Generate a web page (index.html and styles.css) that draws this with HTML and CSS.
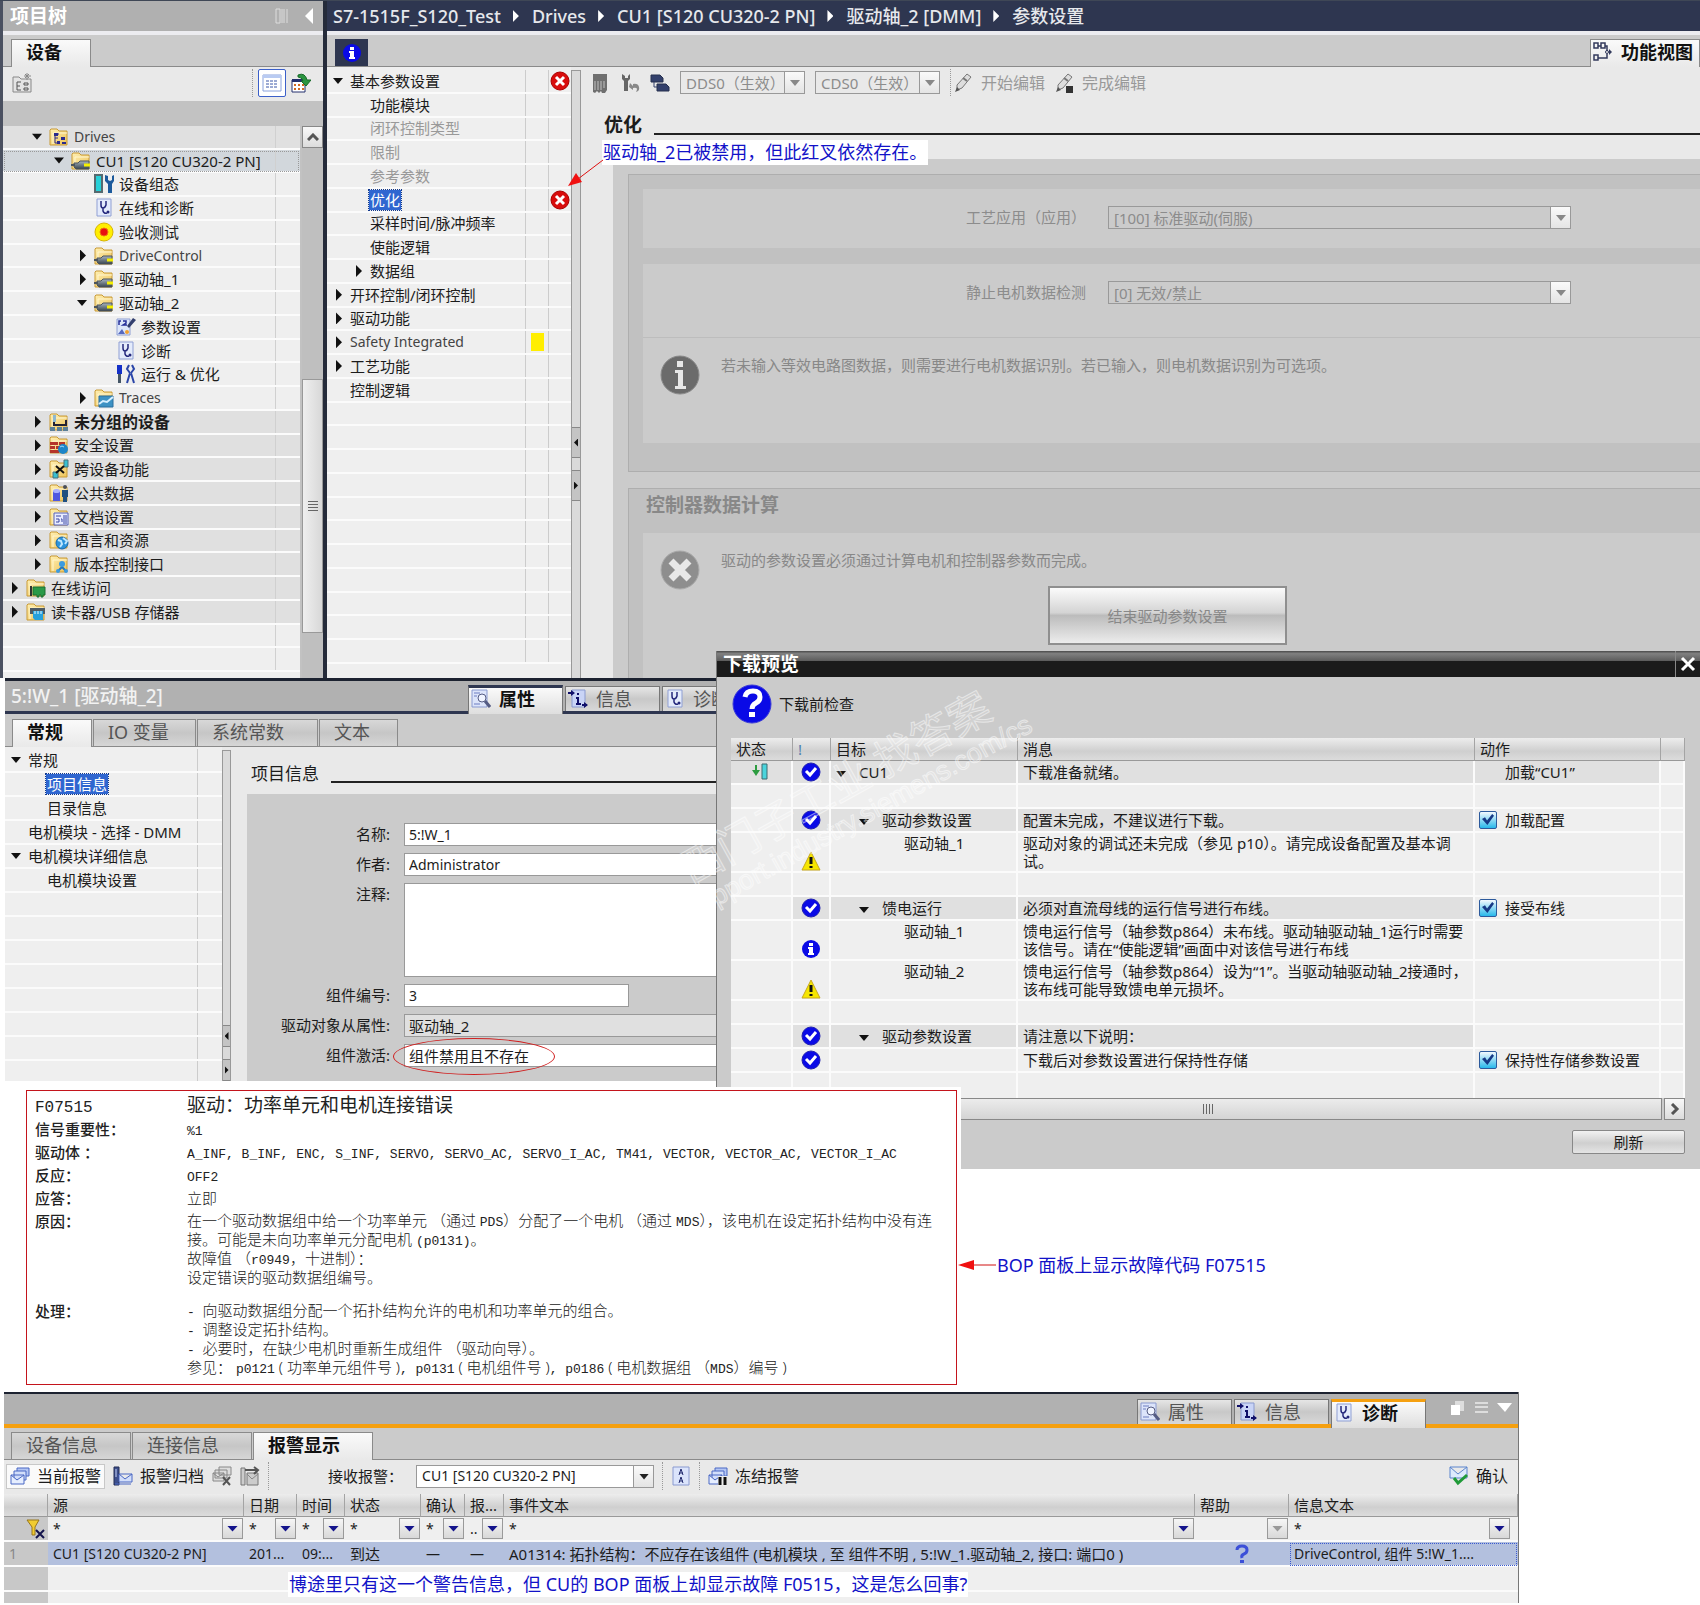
FILE: index.html
```html
<!DOCTYPE html>
<html lang="zh-CN">
  <head>
    <meta charset="utf-8" />
    <title>S7-1515F_S120_Test</title>
    <link rel="stylesheet" href="styles.css">
  </head>
  <body>
    <svg class="sprite" aria-hidden="true">
      <defs>
        <linearGradient id="gold" x1="0" y1="0" x2="1" y2="1">
          <stop offset="0" stop-color="#fff0b4" />
          <stop offset="1" stop-color="#edc35a" />
        </linearGradient>
        <linearGradient id="steel" x1="0" y1="0" x2="0" y2="1">
          <stop offset="0" stop-color="#a8b4be" />
          <stop offset="1" stop-color="#38444e" />
        </linearGradient>
      </defs>
      <symbol id="folder" viewBox="0 0 20 20">
        <path d="M1 18V3l1-1h6l2 2h8v14z" fill="url(#gold)" stroke="#c99a35" />
        <path d="M4 17V6h14" fill="none" stroke="#fff6d0" />
      </symbol>
      <symbol id="folder-net" viewBox="0 0 20 20">
        <use href="#folder" />
        <path d="M5 7h5M6 7v9h4M6 11h3" fill="none" stroke="#2a2a8c" />
        <path d="M5 6h4v3H5zM12 10h4v3h-4zM8 14h3v3H8zM13 15h4v2h-4z" fill="#2a2a8c" />
      </symbol>
      <symbol id="folder-drive" viewBox="0 0 20 20">
        <use href="#folder" />
        <path d="M3 12h4l2-2h9v8H5l-2-2z" fill="url(#steel)" stroke="#4c555c" />
        <path d="M0 14h4" stroke="#4c555c" stroke-width="2" />
        <path d="M13 14h6" stroke="#f5f000" stroke-width="3" />
      </symbol>
      <symbol id="device" viewBox="0 0 20 20">
        <path d="M1 1h7v17H1z" fill="#26d0d8" stroke="#566a70" stroke-width="2" />
        <path d="M11 1v6l3 3v9h4v-9l2-3V1l-2 1v4l-2 1-2-1V2z" fill="#1c5a9c" />
      </symbol>
      <symbol id="diag" viewBox="0 0 20 20">
        <path d="M3 1h14v17H3z" fill="#e4ebfb" stroke="#8f9fd4" />
        <path d="M7 3v4q0 3 2 3t3-3V3M9 10v3q1 3 4 2" fill="none" stroke="#25287c" stroke-width="1.500" />
        <circle cx="14" cy="14" r="1.500" fill="#25287c" />
      </symbol>
      <symbol id="accept" viewBox="0 0 20 20">
        <circle cx="10" cy="10" r="9" fill="#ffee00" stroke="#d8b400" />
        <circle cx="10" cy="10" r="4" fill="#e81010" stroke="#f07010" />
      </symbol>
      <symbol id="params" viewBox="0 0 20 20">
        <path d="M1 2h13v16H1z" fill="#dce6fa" stroke="#8f9fd4" />
        <path d="M3 8V4h2M7 4h3v2L7 8h4" fill="none" stroke="#26309a" stroke-width="1.500" />
        <path d="M11 9l6-8 3 2-7 8z" fill="#333f6e" />
        <path d="M2 17l4-5 3 5z" fill="#5568c0" />
        <circle cx="11" cy="15" r="2" fill="#f0a030" />
      </symbol>
      <symbol id="tune" viewBox="0 0 20 20">
        <path d="M1 1h5v9H1z" fill="#1430c8" />
        <path d="M2 10h3v9H2z" fill="#456" />
        <path d="M13 1l-2 4 3 4M16 1l2 4-3 4M14 9l-3 10M15 9l3 10" fill="none" stroke="#2a45a8" stroke-width="2" />
      </symbol>
      <symbol id="traces" viewBox="0 0 20 20">
        <use href="#folder" />
        <path d="M5 8h14v11H5z" fill="#3d92c4" stroke="#2b6f9e" />
        <path d="M5 16l4-3 4 1 6-5" fill="none" stroke="#d8f0ff" stroke-width="2" />
      </symbol>
      <symbol id="ungrouped" viewBox="0 0 20 20">
        <use href="#folder" />
        <path d="M5 4v9h12V8" fill="none" stroke="#223" stroke-width="2" />
        <path d="M4 3h3v7H4z" fill="#8fb8d0" />
        <path d="M1 15h5v4H1zM8 15h5v4H8zM14 15h5v4h-5z" fill="#5b7f96" />
      </symbol>
      <symbol id="security" viewBox="0 0 20 20">
        <use href="#folder" />
        <path d="M1 7h8v3H1zM10 7h6v3h-6zM1 11h5v3H1zM7 11h5v3H7zM1 15h9v3H1z" fill="#b5352a" />
        <circle cx="14" cy="14" r="5" fill="#1d85c8" />
        <path d="M11 12q2-2 4 0" fill="none" stroke="#a8dcf8" />
      </symbol>
      <symbol id="cross" viewBox="0 0 20 20">
        <use href="#folder" />
        <path d="M15 1h4v7h-4zM4 13h5v6H4z" fill="#38c0d0" stroke="#47727c" />
        <path d="M7 7l8 7M15 7l-8 7" stroke="#111" stroke-width="2" />
      </symbol>
      <symbol id="common" viewBox="0 0 20 20">
        <use href="#folder" />
        <path d="M4 8h7v10H4z" fill="#5058e0" />
        <ellipse cx="7.500" cy="8" rx="3.500" ry="2" fill="#a8b0ff" />
        <circle cx="16" cy="4" r="2" fill="#4a4f58" />
        <path d="M13 7h6v7h-1v5h-4v-5h-1z" fill="#1f4f80" />
      </symbol>
      <symbol id="docs" viewBox="0 0 20 20">
        <use href="#folder" />
        <path d="M5 6h14v12H5z" fill="#e8ecff" stroke="#5560b8" />
        <path d="M7 9h5M7 12h3v3H7M12 12h1v3M15 8v9M17 8v9" fill="none" stroke="#3b46a4" />
      </symbol>
      <symbol id="lang" viewBox="0 0 20 20">
        <use href="#folder" />
        <circle cx="13" cy="13" r="6" fill="#2a93dc" stroke="#1b68a8" />
        <path d="M9 10l3 1 1 3-2 3M14 8l4 3-2 3" fill="none" stroke="#bfe8ff" stroke-width="2" />
      </symbol>
      <symbol id="version" viewBox="0 0 20 20">
        <use href="#folder" />
        <path d="M13 9v4l-4 4M13 13l4 4" fill="none" stroke="#2776b8" stroke-width="2" />
        <circle cx="13" cy="10" r="3" fill="#3b9be0" />
        <circle cx="9" cy="17" r="2" fill="#3b9be0" />
        <circle cx="17" cy="17" r="2" fill="#3b9be0" />
      </symbol>
      <symbol id="online" viewBox="0 0 20 20">
        <use href="#folder" />
        <path d="M5 8v10" stroke="#333" stroke-width="2" />
        <path d="M7 9h12v8h-2v2h-2v-2h-2v2h-2v-2H7z" fill="#2a9a48" stroke="#1c6e32" />
      </symbol>
      <symbol id="card" viewBox="0 0 20 20">
        <use href="#folder" />
        <path d="M4 6h15v6H4z" fill="#4c5a66" />
        <path d="M7 9h10v9h-8l-2-2z" fill="#26a0dc" />
        <path d="M9 9v3M12 9v3M15 9v3" stroke="#e8f8ff" />
      </symbol>
      <symbol id="add-obj" viewBox="0 0 20 20">
        <path d="M1 19V4h6l2 2h10v13z" fill="#e4e4e4" stroke="#888" />
        <path d="M5 9v8h4M5 9h4M5 13h3M12 10h4v2h-4zM12 15h4v2h-4z" fill="none" stroke="#555" />
        <path d="M15 0v7M12 3h7M13 1l4 4M17 1l-4 4" stroke="#888" />
      </symbol>
      <symbol id="grid-view" viewBox="0 0 20 20">
        <path d="M1 2h18v16H1z" fill="#fff" stroke="#8aa2dc" />
        <path d="M1 2h18v3H1z" fill="#b9cbf2" />
        <path d="M4 8h12M4 11h12M4 14h12" stroke="#3a57a8" stroke-dasharray="3 1" />
      </symbol>
      <symbol id="goto" viewBox="0 0 20 20">
        <path d="M1 7h13v12H1z" fill="#fff" stroke="#24306e" />
        <path d="M1 6h13v3H1z" fill="#24306e" />
        <path d="M3 12h2M7 12h2M11 12h2M3 16h2M7 16h2M11 16h2" stroke="#d06a20" stroke-width="2" />
        <path d="M7 2q7-3 9 5h4l-5 6-5-5h2q-1-4-5-4z" fill="#2b9440" stroke="#176a28" />
      </symbol>
      <symbol id="error" viewBox="0 0 20 20">
        <circle cx="10" cy="10" r="9" fill="#d80c0c" stroke="#a00" />
        <path d="M6 6l8 8M14 6l-8 8" stroke="#fff" stroke-width="3" />
      </symbol>
      <symbol id="info" viewBox="0 0 20 20">
        <circle cx="10" cy="10" r="9" fill="#0a0ae6" />
        <path d="M8 4h4v3H8zM7 8h5v6h1v2H7v-2h1v-4H7z" fill="#fff" />
      </symbol>
      <symbol id="ok" viewBox="0 0 20 20">
        <circle cx="10" cy="10" r="9" fill="#0a0ae6" stroke="#2020b0" />
        <path d="M5 9l4 4 6-7" fill="none" stroke="#fff" stroke-width="3" />
      </symbol>
      <symbol id="warn" viewBox="0 0 20 20">
        <path d="M10 1l9 18H1z" fill="#f6e600" stroke="#c8a820" />
        <path d="M10 6v7M10 15v2" stroke="#111" stroke-width="3" />
      </symbol>
      <symbol id="big-info" viewBox="0 0 40 40">
        <circle cx="20" cy="20" r="19" fill="#6b6b6b" stroke="#8a8a8a" />
        <path d="M17 6h6v6h-6zM15 15h8v16h3v3H15v-3h3V18h-3z" fill="#e8e8e8" />
      </symbol>
      <symbol id="big-error" viewBox="0 0 40 40">
        <circle cx="20" cy="20" r="19" fill="#8e8e8e" stroke="#aaa" />
        <path d="M11 11l18 18M29 11L11 29" stroke="#e8e8e8" stroke-width="7" />
      </symbol>
      <symbol id="big-ask" viewBox="0 0 40 40">
        <circle cx="20" cy="20" r="19" fill="#0a0ae6" stroke="#3a3ad8" />
        <path d="M13 13q1-6 8-6t7 6q0 4-4 6t-4 6" fill="none" stroke="#fff" stroke-width="5" />
        <path d="M17 28h6v5h-6z" fill="#fff" />
      </symbol>
      <symbol id="module" viewBox="0 0 20 20">
        <path d="M3 1h14v16l-2 3h-3l-1-2-2 2-2-2-2 2-2-1z" fill="#6f6f6f" />
        <path d="M5 8v9M8 8v9M11 8v9M14 8v7" stroke="#c4c4c4" />
      </symbol>
      <symbol id="wrench" viewBox="0 0 20 20">
        <path d="M2 1v5l2 2v10h4V8l2-2V1L8 3v2H5V3z" fill="#666" />
        <path d="M10 10l3 3v-2q5-1 6 3t-3 5q3-5-3-4v2l-4-3z" fill="#888" />
      </symbol>
      <symbol id="copy-set" viewBox="0 0 20 20">
        <path d="M1 2h9l3 3v4H1zM7 11h9l3 3v4H7z" fill="#33406c" stroke="#26304f" />
        <path d="M4 9v5h3" fill="none" stroke="#33406c" />
      </symbol>
      <symbol id="pen" viewBox="0 0 20 20">
        <path d="M3 12L13 1l4 3L8 15l-5 2z" fill="#ddd" stroke="#777" />
        <path d="M9 5l4 3" stroke="#777" stroke-width="2" />
        <path d="M1 19l2-5 3 3z" fill="#555" />
      </symbol>
      <symbol id="function-view" viewBox="0 0 20 20">
        <path d="M1 1h4v5H1zM8 1h4v5H8zM1 13h4v5H1zM5 4h3M12 4h2v5M5 16h9v-4" fill="none" stroke="#333a5c" stroke-width="1.500" />
        <circle cx="14" cy="10" r="1.500" fill="none" stroke="#333a5c" />
        <path d="M16 7l3 3-3 3z" fill="#333a5c" />
      </symbol>
      <symbol id="prop" viewBox="0 0 20 20">
        <path d="M1 1h15v17H1z" fill="#dce4fa" stroke="#8a9ad0" />
        <path d="M3 4h6M3 7h3M3 15h6" stroke="#6c7cc0" />
        <circle cx="11" cy="9" r="4" fill="#f0f4ff" stroke="#555c84" />
        <path d="M14 12l5 6" stroke="#555c84" stroke-width="3" />
      </symbol>
      <symbol id="msg" viewBox="0 0 20 20">
        <path d="M4 1h13v17H4z" fill="#c9d4f6" stroke="#8a9ad0" />
        <path d="M0 4h5M14 16h5" stroke="#10106a" stroke-width="2" />
        <path d="M3 1l4 3-4 3zM16 13l4 3-4 3z" fill="#10106a" />
        <path d="M9 4h2v2H9zM8 8h3v6h2v2H8v-2h1v-4H8z" fill="#10106a" />
      </symbol>
      <symbol id="ready" viewBox="0 0 20 20">
        <path d="M5 3v8" stroke="#2c9c40" stroke-width="2" />
        <path d="M1 8l4 6 4-6z" fill="#2c9c40" />
        <path d="M11 2h5v15h-5z" fill="#4ad4dc" stroke="#3c6a70" />
      </symbol>
      <symbol id="mails" viewBox="0 0 20 20">
        <path d="M7 2h12v8H7z" fill="#b4c6f4" stroke="#4a68c4" />
        <path d="M4 5h12v9H4z" fill="#d2defa" stroke="#4a68c4" />
        <path d="M1 9h13v9H1zM1 9l6 5 7-5" fill="#e6eeff" stroke="#4a68c4" />
      </symbol>
      <symbol id="mails-off" viewBox="0 0 20 20">
        <path d="M7 1h12v8H7zM3 4h12v8H3zM1 7h11v8H1zM1 7l5 4 6-4" fill="#ddd" stroke="#888" />
        <path d="M11 11l7 8M18 11l-7 8" stroke="#555" stroke-width="2" />
      </symbol>
      <symbol id="archive" viewBox="0 0 20 20">
        <path d="M1 1h5v18H1z" fill="#3d4f8c" stroke="#222c54" />
        <path d="M3 3v8" stroke="#c8d4f8" />
        <path d="M6 8h13v8H6zM6 8l6 5 7-5M2 18h16" fill="#d2defa" stroke="#4a68c4" />
      </symbol>
      <symbol id="export" viewBox="0 0 20 20">
        <path d="M1 2h4v17H1zM7 7h11v12H7z" fill="#ccc" stroke="#777" />
        <path d="M5 4h12M14 1l4 3-4 4" fill="none" stroke="#555" stroke-width="2" />
        <path d="M7 8l5 5 6-5" fill="none" stroke="#888" />
      </symbol>
      <symbol id="sort" viewBox="0 0 20 20">
        <path d="M2 1h16v18H2z" fill="#dbe4fb" stroke="#8a9ad0" />
        <path d="M8 9l2-6 2 6M8 7h4M8 17l2-6 2 6M8 15h4" fill="none" stroke="#20286c" />
      </symbol>
      <symbol id="freeze" viewBox="0 0 20 20">
        <use href="#mails" />
        <path d="M10 10h9v10h-9z" fill="#eee" />
        <path d="M12 11v8M17 11v8" stroke="#111" stroke-width="3" />
      </symbol>
      <symbol id="ack" viewBox="0 0 20 20">
        <path d="M1 1h17v11H1zM1 1l8 7 9-7" fill="#dceafc" stroke="#5b84cc" />
        <path d="M5 12l4 5 9-8" fill="none" stroke="#1f9a38" stroke-width="3" />
      </symbol>
      <symbol id="filter" viewBox="0 0 20 20">
        <path d="M1 1h12l-4 7v8H6V8z" fill="#f0cc30" stroke="#98761c" />
        <path d="M10 11l8 8M18 11l-8 8" stroke="#14144c" stroke-width="2" />
      </symbol>
      <symbol id="help" viewBox="0 0 20 20">
        <path d="M5 6q0-4 5-4t5 4q0 3-3 4t-2 4" fill="none" stroke="#3c50d8" stroke-width="3" />
        <path d="M8 16h4v3H8z" fill="#3c50d8" />
      </symbol>
    </svg>

    <main class="desktop">
      <div class="workbench">
        <aside class="project">
          <header class="project-title">
            <h2>项目树</h2>
            <svg class="icon-sm" viewBox="0 0 14 16"><path d="M1 1h4v14H1zM7 1v14M9 1v14M12 1v14" fill="none" stroke="#ddd" /></svg>
            <svg class="icon-sm" viewBox="0 0 14 16"><path d="M12 0v16L4 8z" fill="#fff" /></svg>
          </header>
          <div class="tabbar"><button class="tab active">设备</button></div>
          <div class="project-tools">
            <svg class="icon"><use href="#add-obj" /></svg>
            <span class="dots push"></span>
            <button class="view-btn" aria-label="详细视图"><svg class="icon"><use href="#grid-view" /></svg></button>
            <svg class="icon"><use href="#goto" /></svg>
          </div>
          <div class="project-band"></div>
          <div class="tree-wrap">
            <ul class="tree">
              <li class="l1 group latin"><i class="open"></i><svg class="icon"><use href="#folder-net" /></svg>Drives</li>
              <li class="l2 selected"><i class="open"></i><svg class="icon"><use href="#folder-drive" /></svg>CU1 [S120 CU320-2 PN]</li>
              <li class="l3"><i></i><svg class="icon"><use href="#device" /></svg>设备组态</li>
              <li class="l3"><i></i><svg class="icon"><use href="#diag" /></svg>在线和诊断</li>
              <li class="l3"><i></i><svg class="icon"><use href="#accept" /></svg>验收测试</li>
              <li class="l3 latin"><i class="closed"></i><svg class="icon"><use href="#folder-drive" /></svg>DriveControl</li>
              <li class="l3"><i class="closed"></i><svg class="icon"><use href="#folder-drive" /></svg>驱动轴_1</li>
              <li class="l3"><i class="open"></i><svg class="icon"><use href="#folder-drive" /></svg>驱动轴_2</li>
              <li class="l4"><i></i><svg class="icon"><use href="#params" /></svg>参数设置</li>
              <li class="l4"><i></i><svg class="icon"><use href="#diag" /></svg>诊断</li>
              <li class="l4"><i></i><svg class="icon"><use href="#tune" /></svg>运行 &amp; 优化</li>
              <li class="l3 latin"><i class="closed"></i><svg class="icon"><use href="#traces" /></svg>Traces</li>
              <li class="l1 group strong"><i class="closed"></i><svg class="icon"><use href="#ungrouped" /></svg>未分组的设备</li>
              <li class="l1 group"><i class="closed"></i><svg class="icon"><use href="#security" /></svg>安全设置</li>
              <li class="l1 group"><i class="closed"></i><svg class="icon"><use href="#cross" /></svg>跨设备功能</li>
              <li class="l1 group"><i class="closed"></i><svg class="icon"><use href="#common" /></svg>公共数据</li>
              <li class="l1 group"><i class="closed"></i><svg class="icon"><use href="#docs" /></svg>文档设置</li>
              <li class="l1 group"><i class="closed"></i><svg class="icon"><use href="#lang" /></svg>语言和资源</li>
              <li class="l1 group"><i class="closed"></i><svg class="icon"><use href="#version" /></svg>版本控制接口</li>
              <li class="l0 group"><i class="closed"></i><svg class="icon"><use href="#online" /></svg>在线访问</li>
              <li class="l0 group"><i class="closed"></i><svg class="icon"><use href="#card" /></svg>读卡器/USB 存储器</li>
              <li></li>
              <li></li>
            </ul>
            <div class="vscroll">
              <button class="scroll-up" aria-label="向上滚动"><svg viewBox="0 0 12 8" width="12" height="8"><path d="M1 7l5-5 5 5" fill="none" stroke="#555" stroke-width="3" /></svg></button>
              <div class="vthumb"><span class="grip"></span></div>
            </div>
          </div>
        </aside>

        <section class="editor">
          <nav class="crumbs">
            <a>S7-1515F_S120_Test</a><i></i><a>Drives</a><i></i><a>CU1 [S120 CU320-2 PN]</a><i></i><a>驱动轴_2 [DMM]</a><i></i><a>参数设置</a>
          </nav>
          <div class="tabbar editor-tabs">
            <button class="info-tab" aria-label="信息"><svg class="icon"><use href="#info" /></svg></button>
            <button class="tab active view-tab"><svg class="icon"><use href="#function-view" /></svg>功能视图</button>
          </div>
          <div class="editor-body">
            <ul class="nav">
              <li><i class="open"></i>基本参数设置<b></b><b><svg class="icon"><use href="#error" /></svg></b></li>
              <li class="sub"><i></i>功能模块<b></b><b></b></li>
              <li class="sub off"><i></i>闭环控制类型<b></b><b></b></li>
              <li class="sub off"><i></i>限制<b></b><b></b></li>
              <li class="sub off"><i></i>参考参数<b></b><b></b></li>
              <li class="sub"><i></i><mark>优化</mark><b></b><b><svg class="icon"><use href="#error" /></svg></b></li>
              <li class="sub"><i></i>采样时间/脉冲频率<b></b><b></b></li>
              <li class="sub"><i></i>使能逻辑<b></b><b></b></li>
              <li class="sub"><i class="closed"></i>数据组<b></b><b></b></li>
              <li><i class="closed"></i>开环控制/闭环控制<b></b><b></b></li>
              <li><i class="closed"></i>驱动功能<b></b><b></b></li>
              <li class="latin"><i class="closed"></i>Safety Integrated<b><span class="flag"></span></b><b></b></li>
              <li><i class="closed"></i>工艺功能<b></b><b></b></li>
              <li><i></i>控制逻辑<b></b><b></b></li>
              <li><b></b><b></b></li>
              <li><b></b><b></b></li>
              <li><b></b><b></b></li>
              <li><b></b><b></b></li>
              <li><b></b><b></b></li>
              <li><b></b><b></b></li>
              <li><b></b><b></b></li>
              <li><b></b><b></b></li>
              <li><b></b><b></b></li>
              <li><b></b><b></b></li>
              <li><b></b><b></b></li>
            </ul>
            <div class="splitter">
              <button class="split-l" aria-label="收起"></button>
              <button class="split-r" aria-label="展开"></button>
            </div>
            <div class="view">
              <div class="view-tools">
                <svg class="icon"><use href="#module" /></svg>
                <svg class="icon"><use href="#wrench" /></svg>
                <svg class="icon"><use href="#copy-set" /></svg>
                <span class="combo"><select disabled aria-label="DDS"><option>DDS0（生效）</option></select></span>
                <span class="combo"><select disabled aria-label="CDS"><option>CDS0（生效）</option></select></span>
                <div class="edit-tools">
                  <button class="tool" disabled><svg class="icon"><use href="#pen" /></svg>开始编辑</button>
                  <button class="tool" disabled><svg class="icon"><use href="#pen" /><rect x="11" y="13" width="7" height="7" fill="#333" /></svg>完成编辑</button>
                </div>
              </div>
              <h1 class="ruled">优化</h1>
              <div class="panel">
                <div class="box">
                  <div class="card">
                    <div class="setting">
                      <label for="app">工艺应用（应用）</label>
                      <span class="combo wide"><select id="app" disabled><option>[100] 标准驱动(伺服)</option></select></span>
                    </div>
                  </div>
                  <div class="card">
                    <div class="setting">
                      <label for="ident">静止电机数据检测</label>
                      <span class="combo wide"><select id="ident" disabled><option>[0] 无效/禁止</option></select></span>
                    </div>
                    <div class="hint ruled-top">
                      <svg class="icon-big"><use href="#big-info" /></svg>
                      <p>若未输入等效电路图数据，则需要进行电机数据识别。若已输入，则电机数据识别为可选项。</p>
                    </div>
                  </div>
                </div>
                <div class="box calc">
                  <h3>控制器数据计算</h3>
                  <div class="card">
                    <div class="hint">
                      <svg class="icon-big"><use href="#big-error" /></svg>
                      <p>驱动的参数设置必须通过计算电机和控制器参数而完成。</p>
                    </div>
                    <button class="finish" disabled>结束驱动参数设置</button>
                  </div>
                </div>
              </div>
            </div>
          </div>
        </section>

        <div class="note note-top">驱动轴_2已被禁用，但此红叉依然存在。</div>
        <svg class="arrow-top" viewBox="0 0 36 28"><path d="M35 1L10 20" stroke="#e01010" fill="none" /><path d="M0 27l8-13 6 9z" fill="#f01010" /></svg>
      </div>

      <section class="inspector">
        <header class="pane-head">
          <h2>5:!W_1 [驱动轴_2]</h2>
          <button class="pane-tab active"><svg class="icon"><use href="#prop" /></svg>属性</button>
          <button class="pane-tab"><svg class="icon"><use href="#msg" /></svg>信息</button>
          <button class="pane-tab"><svg class="icon"><use href="#diag" /></svg>诊断</button>
        </header>
        <div class="tabbar sub-tabs">
          <button class="tab active">常规</button>
          <button class="tab">IO 变量</button>
          <button class="tab">系统常数</button>
          <button class="tab">文本</button>
        </div>
        <div class="inspector-body">
          <ul class="nav short">
            <li><i class="open"></i>常规<b></b></li>
            <li class="sub"><i></i><mark>项目信息</mark><b></b></li>
            <li class="sub"><i></i>目录信息<b></b></li>
            <li><i></i>电机模块 - 选择 - DMM<b></b></li>
            <li><i class="open"></i>电机模块详细信息<b></b></li>
            <li class="sub"><i></i>电机模块设置<b></b></li>
            <li><b></b></li>
            <li><b></b></li>
            <li><b></b></li>
            <li><b></b></li>
            <li><b></b></li>
            <li><b></b></li>
            <li><b></b></li>
            <li><b></b></li>
          </ul>
          <div class="splitter low">
            <button class="split-l" aria-label="收起"></button>
            <button class="split-r" aria-label="展开"></button>
          </div>
          <div class="info">
            <h3 class="ruled">项目信息</h3>
            <form class="fields">
              <label for="name">名称:</label><input id="name" type="text" value="5:!W_1" />
              <label for="author">作者:</label><input id="author" type="text" value="Administrator" />
              <label for="comment">注释:</label><textarea id="comment"></textarea>
              <label for="number">组件编号:</label><input id="number" class="narrow" type="text" value="3" />
              <label for="owner">驱动对象从属性:</label><input id="owner" class="readonly" type="text" value="驱动轴_2" readonly />
              <label for="state">组件激活:</label><span class="circled"><input id="state" type="text" value="组件禁用且不存在" /></span>
            </form>
          </div>
        </div>
      </section>

      <section class="dialog">
        <header class="dialog-title">
          <h2>下载预览</h2>
          <button class="close" aria-label="关闭"><svg viewBox="0 0 16 16" width="16" height="16"><path d="M2 2l12 12M14 2L2 14" stroke="#fff" stroke-width="3" /></svg></button>
        </header>
        <div class="dialog-lead"><svg class="icon-big"><use href="#big-ask" /></svg>下载前检查</div>
        <div class="preview-wrap">
        <table class="preview">
          <colgroup><col class="p-state"><col class="p-mark"><col class="p-target"><col><col class="p-action"><col class="p-end"></colgroup>
          <thead>
            <tr><th>状态</th><th class="bang">!</th><th>目标</th><th>消息</th><th>动作</th><th></th></tr>
          </thead>
          <tbody>
            <tr><td class="sh mid"><svg class="icon"><use href="#ready" /></svg></td><td class="sh mid"><svg class="icon"><use href="#ok" /></svg></td><td class="sh t0"><i class="open"></i>CU1</td><td class="sh">下载准备就绪。</td><td class="sh"><span class="act">加载“CU1”</span></td><td></td></tr>
            <tr><td></td><td></td><td></td><td></td><td></td><td></td></tr>
            <tr><td></td><td class="sh mid"><svg class="icon"><use href="#ok" /></svg></td><td class="sh t1"><i class="open"></i>驱动参数设置</td><td class="sh">配置未完成，不建议进行下载。</td><td><label class="act"><input type="checkbox" checked />加载配置</label></td><td></td></tr>
            <tr class="tall"><td></td><td class="mid low"><svg class="icon"><use href="#warn" /></svg></td><td class="t2">驱动轴_1</td><td>驱动对象的调试还未完成（参见 p10）。请完成设备配置及基本调<br>试。</td><td></td><td></td></tr>
            <tr><td></td><td></td><td></td><td></td><td></td><td></td></tr>
            <tr><td></td><td class="sh mid"><svg class="icon"><use href="#ok" /></svg></td><td class="sh t1"><i class="open"></i>馈电运行</td><td class="sh">必须对直流母线的运行信号进行布线。</td><td><label class="act"><input type="checkbox" checked />接受布线</label></td><td></td></tr>
            <tr class="tall"><td></td><td class="mid low"><svg class="icon"><use href="#info" /></svg></td><td class="t2">驱动轴_1</td><td>馈电运行信号（轴参数p864）未布线。驱动轴驱动轴_1运行时需要<br>该信号。请在“使能逻辑”画面中对该信号进行布线</td><td></td><td></td></tr>
            <tr class="tall"><td></td><td class="mid low"><svg class="icon"><use href="#warn" /></svg></td><td class="t2">驱动轴_2</td><td>馈电运行信号（轴参数p864）设为“1”。当驱动轴驱动轴_2接通时，<br>该布线可能导致馈电单元损坏。</td><td></td><td></td></tr>
            <tr><td></td><td></td><td></td><td></td><td></td><td></td></tr>
            <tr><td></td><td class="sh mid"><svg class="icon"><use href="#ok" /></svg></td><td class="sh t1"><i class="open"></i>驱动参数设置</td><td class="sh">请注意以下说明：</td><td></td><td></td></tr>
            <tr><td></td><td class="mid"><svg class="icon"><use href="#ok" /></svg></td><td></td><td>下载后对参数设置进行保持性存储</td><td><label class="act"><input type="checkbox" checked />保持性存储参数设置</label></td><td></td></tr>
            <tr class="cut"><td></td><td></td><td></td><td></td><td></td><td></td></tr>
          </tbody>
        </table>
        <div class="hscroll">
          <div class="hthumb"><span class="grip upright"></span></div>
          <button class="scroll-right" aria-label="向右滚动"><svg viewBox="0 0 10 12" width="10" height="12"><path d="M2 1l5 5-5 5" fill="none" stroke="#555" stroke-width="3" /></svg></button>
        </div>
        </div>
        <footer class="dialog-foot"><button class="refresh">刷新</button></footer>
      </section>

      <div class="fault-row">
        <div class="fault-sheet">
          <dl class="fault">
            <dt class="head"><code>F07515</code></dt><dd class="head">驱动：功率单元和电机连接错误</dd>
            <dt>信号重要性：</dt><dd><code>%1</code></dd>
            <dt>驱动体 ：</dt><dd><code>A_INF, B_INF, ENC, S_INF, SERVO, SERVO_AC, SERVO_I_AC, TM41, VECTOR, VECTOR_AC, VECTOR_I_AC</code></dd>
            <dt>反应：</dt><dd><code>OFF2</code></dd>
            <dt>应答：</dt><dd>立即</dd>
            <dt>原因：</dt>
            <dd class="para">在一个驱动数据组中给一个功率单元 （通过 <code>PDS</code>）分配了一个电机 （通过 <code>MDS</code>），该电机在设定拓扑结构中没有连<br>接。可能是未向功率单元分配电机 <code>(p0131)</code>。<br>故障值 （<code>r0949</code>，十进制）：<br>设定错误的驱动数据组编号。</dd>
            <dt>处理：</dt>
            <dd class="para"><code>- </code>向驱动数据组分配一个拓扑结构允许的电机和功率单元的组合。<br><code>- </code>调整设定拓扑结构。<br><code>- </code>必要时，在缺少电机时重新生成组件 （驱动向导）。<br>参见： <code>p0121</code> ( 功率单元组件号 )<code>, p0131</code> ( 电机组件号 )<code>, p0186</code> ( 电机数据组 （<code>MDS</code>）编号 )</dd>
          </dl>
        </div>
        <div class="bop">
          <svg viewBox="0 0 38 12" width="38" height="12"><path d="M14 6h24" stroke="#d01010" /><path d="M0 6l16-5v10z" fill="#f01010" /></svg>
          BOP 面板上显示故障代码 F07515
        </div>
      </div>

      <section class="alarms">
        <header class="pane-head orange">
          <h2></h2>
          <button class="pane-tab"><svg class="icon"><use href="#prop" /></svg>属性</button>
          <button class="pane-tab"><svg class="icon"><use href="#msg" /></svg>信息</button>
          <button class="pane-tab active"><svg class="icon"><use href="#diag" /></svg>诊断</button>
          <svg class="win-btns" viewBox="0 0 62 16"><path d="M5 1h9v10H5z" fill="#ddd" /><path d="M1 5h9v10H1z" fill="#fff" /><path d="M25 3h13M25 7h13M25 12h13" stroke="#ddd" stroke-width="2" /><path d="M47 3h15l-7 9z" fill="#fff" /></svg>
        </header>
        <div class="tabbar alarm-tabs">
          <button class="tab">设备信息</button>
          <button class="tab">连接信息</button>
          <button class="tab active">报警显示</button>
        </div>
        <div class="alarm-tools">
          <button class="tool pressed"><svg class="icon"><use href="#mails" /></svg>当前报警</button>
          <button class="tool"><svg class="icon"><use href="#archive" /></svg>报警归档</button>
          <svg class="icon"><use href="#mails-off" /></svg>
          <svg class="icon"><use href="#export" /></svg>
          <span class="dots"></span>
          <label class="recv" for="recv">接收报警：</label>
          <span class="combo live"><select id="recv"><option>CU1 [S120 CU320-2 PN]</option></select></span>
          <span class="dots"></span>
          <svg class="icon"><use href="#sort" /></svg>
          <span class="dots"></span>
          <button class="tool"><svg class="icon"><use href="#freeze" /></svg>冻结报警</button>
          <button class="tool push"><svg class="icon"><use href="#ack" /></svg>确认</button>
        </div>
        <table class="alarm-table">
          <colgroup><col class="a-no"><col class="a-src"><col class="a-date"><col class="a-time"><col class="a-state"><col class="a-ack"><col class="a-alarm"><col><col class="a-help"><col class="a-info"></colgroup>
          <thead>
            <tr><th></th><th>源</th><th>日期</th><th>时间</th><th>状态</th><th>确认</th><th>报...</th><th>事件文本</th><th>帮助</th><th>信息文本</th></tr>
          </thead>
          <tbody>
            <tr class="filters">
              <td class="no"><svg class="icon"><use href="#filter" /></svg></td>
              <td><div><input aria-label="源" value="*"><button aria-label="筛选源"></button></div></td>
              <td><div><input aria-label="日期" value="*"><button aria-label="筛选日期"></button></div></td>
              <td><div><input aria-label="时间" value="*"><button aria-label="筛选时间"></button></div></td>
              <td><div><input aria-label="状态" value="*"><button aria-label="筛选状态"></button></div></td>
              <td><div><input aria-label="确认" value="*"><button aria-label="筛选确认"></button></div></td>
              <td><div><input aria-label="报警" value=".."><button aria-label="筛选报警"></button></div></td>
              <td><div><input aria-label="事件文本" value="*"><button aria-label="筛选事件文本"></button></div></td>
              <td><div><input aria-label="帮助" value="" disabled><button aria-label="筛选帮助" disabled></button></div></td>
              <td class="last"><div><input aria-label="信息文本" value="*"><button aria-label="筛选信息文本"></button></div></td>
            </tr>
            <tr class="hit"><td class="no">1</td><td>CU1 [S120 CU320-2 PN]</td><td>201...</td><td>09:...</td><td class="event">到达</td><td>—</td><td>—</td><td class="event">A01314: 拓扑结构：不应存在该组件 (电机模块 , 至 组件不明 , 5:!W_1.驱动轴_2, 接口: 端口0 )</td><td class="mid"><svg class="icon"><use href="#help" /></svg></td><td class="focus">DriveControl, 组件 5:!W_1....</td></tr>
            <tr><td class="no"></td><td colspan="9"></td></tr>
            <tr class="cut"><td class="no"></td><td colspan="9"></td></tr>
          </tbody>
        </table>
        <div class="note note-bottom">博途里只有这一个警告信息，但 CU的 BOP 面板上却显示故障 F0515，这是怎么回事?</div>
      </section>

      <div class="watermark" aria-hidden="true">
        <div class="wm-cn">西门子工业 找答案</div>
        <div class="wm-url">support.industry.siemens.com/cs</div>
      </div>
    </main>
  </body>
</html>
```
FILE: styles.css
```css
* {
  box-sizing: border-box;
}

body {
  margin: 0;
  background: #fff;
  font-family: "Noto Sans", "Noto Sans CJK SC", sans-serif;
  font-size: 15px;
  line-height: 18px;
  color: #1c1c1c;
}

h1, h2, h3, p, ul, dl, dd {
  margin: 0;
  padding: 0;
}

ul {
  list-style: none;
}

button, input, select, textarea {
  font: inherit;
  color: inherit;
  margin: 0;
}

button {
  padding: 0;
  border: 0;
  background: none;
}

.sprite {
  position: absolute;
  width: 0;
  height: 0;
}

.icon {
  width: 20px;
  height: 20px;
  flex: none;
}

.icon-sm {
  width: 14px;
  height: 16px;
}

.icon-big {
  width: 40px;
  height: 40px;
  flex: none;
}

.push {
  margin-left: auto;
}

.dots {
  align-self: stretch;
  border-left: 1px dotted #999;
}

.desktop {
  position: relative;
  overflow: hidden;
}

/* expand / collapse triangles */
i {
  flex: none;
  width: 17px;
  height: 12px;
}

i.open, i.closed {
  background: #111;
}

i.open {
  clip-path: polygon(0 3px, 10px 3px, 5px 9px);
}

i.closed {
  clip-path: polygon(3px 0, 9px 6px, 3px 12px);
}

/* top window */
.workbench {
  position: relative;
  display: flex;
  height: 678px;
  border-top: 1px solid #3f4756;
}

.project {
  flex: none;
  width: 327px;
  display: flex;
  flex-direction: column;
  border-left: 3px solid #4a5060;
  border-right: 4px solid #252b3a;
  background: #c2c2c2;
}

.project-title {
  display: flex;
  align-items: center;
  gap: 12px;
  height: 30px;
  padding: 0 8px 0 7px;
  background: #b0b0b0;
}

.project-title h2 {
  flex: 1;
  font-size: 19px;
  color: #fff;
}

.tabbar {
  display: flex;
  align-items: flex-end;
  height: 36px;
  border-top: 4px solid #ececf0;
  border-bottom: 1px solid #8a8a8a;
  background: #cbcbcb;
  padding-left: 8px;
}

.tab {
  display: flex;
  align-items: center;
  height: 27px;
  padding: 0 14px 3px;
  border: 1px solid #8a8a8a;
  border-bottom: 0;
  background: linear-gradient(#d8d8d8, #c6c6c6 50%, #d6d6d6);
  font-size: 18px;
  color: #555;
  white-space: nowrap;
}

.tab.active {
  height: 28px;
  margin-bottom: -1px;
  background: linear-gradient(#fafafa, #e9e9e9);
  font-weight: bold;
  color: #111;
}

.project .tab {
  padding-right: 28px;
}

.project-tools {
  display: flex;
  align-items: center;
  gap: 5px;
  height: 34px;
  padding: 2px 12px 4px 9px;
  background: #e9e9e9;
}

.view-btn {
  display: flex;
  padding: 3px;
  border: 1px solid #3b5fc9;
  border-radius: 2px;
  background: #fff;
}

.project-band {
  height: 25px;
  background: #c2c2c2;
}

.tree-wrap {
  flex: 1;
  display: flex;
  min-height: 0;
}

.tree {
  flex: 1;
  display: grid;
  grid-auto-rows: 1fr;
  padding-bottom: 6px;
  background: #efefef;
  margin-right: 2px;
}

.tree li {
  display: flex;
  align-items: center;
  padding-left: 6px;
  border-bottom: 2px solid #fbfbfb;
  white-space: nowrap;
}

.tree li::after {
  content: "";
  align-self: stretch;
  width: 24px;
  margin-left: auto;
  border-left: 1px solid #d0d0d0;
}

.tree .icon {
  margin-right: 5px;
}

.tree .l1 { padding-left: 29px; }
.tree .l2 { padding-left: 51px; }
.tree .l3 { padding-left: 74px; }
.tree .l4 { padding-left: 96px; }

.tree .group {
  background: #e0e0e0;
}

.tree .strong {
  font-size: 16px;
  font-weight: bold;
}

.tree .selected {
  background: #d2d7dc;
  outline: 1px dotted #999;
  outline-offset: -2px;
}

.latin {
  font-size: 14px;
  color: #444;
}

.vscroll {
  width: 21px;
  background: #bfbfbf;
}

.scroll-up, .scroll-right {
  display: flex;
  align-items: center;
  justify-content: center;
  width: 21px;
  height: 22px;
  border: 1px solid #888;
  background: linear-gradient(#f8f8f8, #dcdcdc);
}

.vthumb {
  display: flex;
  align-items: center;
  justify-content: center;
  height: 254px;
  margin-top: 231px;
  border: 1px solid #999;
  background: linear-gradient(90deg, #efefef, #d8d8d8);
}

.grip {
  width: 10px;
  height: 10px;
  background: repeating-linear-gradient(#666 0 1px, transparent 1px 3px);
}

.grip.upright {
  background: repeating-linear-gradient(90deg, #666 0 1px, transparent 1px 3px);
}

/* editor */
.editor {
  flex: 1;
  min-width: 0;
  display: flex;
  flex-direction: column;
}

.crumbs {
  display: flex;
  align-items: center;
  height: 30px;
  padding-left: 6px;
  background: #2e3650;
  font-size: 18px;
  font-weight: 500;
  color: #e6e8ec;
  white-space: nowrap;
}

.crumbs i {
  width: 6px;
  margin: 0 13px 0 12px;
  background: #fff;
  clip-path: polygon(0 0, 6px 6px, 0 12px);
}

.info-tab {
  display: flex;
  align-items: center;
  justify-content: center;
  width: 33px;
  height: 27px;
  background: #2e3650;
}

.view-tab {
  margin-left: auto;
  gap: 8px;
  padding: 0 6px 3px 2px;
}

.editor-body {
  flex: 1;
  display: flex;
  min-height: 0;
  background: #e9e9e9;
}

.nav {
  flex: none;
  display: grid;
  grid-auto-rows: 1fr;
  width: 244px;
  padding: 3px 0 14px;
  background: #efefef;
}

.nav li {
  display: flex;
  align-items: center;
  padding-left: 6px;
  border-bottom: 2px solid #fbfbfb;
  white-space: nowrap;
}

.nav li.sub {
  padding-left: 26px;
}

.nav .off {
  color: #999;
}

.nav b {
  display: flex;
  align-items: center;
  justify-content: center;
  align-self: stretch;
  width: 23px;
  border-left: 1px solid #ccc;
}

.nav b:first-of-type {
  margin-left: auto;
}

.nav mark {
  padding: 1px;
  margin-left: -1px;
  background: #2f66d0;
  color: #fff;
  outline: 1px dotted #12388c;
}

.flag {
  width: 13px;
  height: 18px;
  background: #ffee00;
}

.splitter {
  flex: none;
  display: flex;
  flex-direction: column;
  gap: 12px;
  width: 10px;
  margin-top: 3px;
  padding-top: 356px;
  border: solid #999;
  border-width: 1px 1px 0;
  background: #dadada;
}

.splitter button {
  height: 31px;
  border: solid #888;
  border-width: 1px 0;
  background: #c4c4c4;
}

.splitter button::before {
  content: "";
  display: block;
  width: 4px;
  height: 8px;
  margin: 0 auto;
  background: #111;
}

.split-l::before {
  clip-path: polygon(100% 0, 100% 100%, 0 50%);
}

.split-r::before {
  clip-path: polygon(0 0, 100% 50%, 0 100%);
}

.view {
  flex: 1;
  min-width: 0;
  display: flex;
  flex-direction: column;
}

.view-tools {
  display: flex;
  align-items: center;
  gap: 10px;
  height: 33px;
  padding: 2px 9px 4px;
}

.edit-tools {
  display: flex;
  align-self: stretch;
  gap: 10px;
  padding-left: 3px;
  border-left: 1px dotted #999;
}

.combo {
  position: relative;
  display: inline-flex;
  width: 125px;
  height: 23px;
  border: 1px solid #999;
}

.combo select {
  width: 100%;
  padding: 0 20px 0 5px;
  border: 0;
  appearance: none;
  background: transparent;
  font-size: 15px;
  color: #8c8c8c;
  opacity: 1;
}

.combo::after {
  content: "";
  position: absolute;
  top: 0;
  right: 0;
  width: 19px;
  height: 100%;
  border-left: 1px solid #999;
  background: linear-gradient(#fafafa, #e4e4e4);
  pointer-events: none;
}

.combo::before {
  content: "";
  position: absolute;
  z-index: 1;
  top: 8px;
  right: 4px;
  width: 10px;
  height: 6px;
  background: #888;
  clip-path: polygon(0 0, 100% 0, 50% 100%);
  pointer-events: none;
}

.combo.wide {
  width: 463px;
}

.combo.live {
  width: 238px;
  background: #fff;
}

.combo.live::before {
  background: #222;
}

.combo.live select {
  font-size: 14px;
  color: #1c1c1c;
}

.tool {
  display: flex;
  align-items: center;
  gap: 7px;
  font-size: 16px;
  white-space: nowrap;
}

.view .tool {
  color: #999;
}

.ruled {
  display: flex;
  align-items: flex-end;
  gap: 12px;
}

.ruled::after {
  content: "";
  flex: 1;
  border-bottom: 2px solid #222;
}

h1.ruled {
  height: 35px;
  padding-left: 23px;
  font-size: 19px;
  line-height: 19px;
}

.panel {
  flex: 1;
  min-height: 0;
  overflow: hidden;
  margin: 24px 0 0 32px;
  padding: 15px 0 0 15px;
  background: #cbcbcb;
}

.box {
  padding: 14px 0 28px 14px;
  margin-bottom: 16px;
  border: 1px solid #aeaeae;
  border-right: 0;
  background: #c1c1c1;
}

.card {
  background: #cbcbcb;
}

.card + .card {
  margin-top: 16px;
}

.setting {
  display: flex;
  gap: 30px;
  padding: 17px 0 19px;
  color: #8c8c8c;
}

.setting label {
  flex: none;
  width: 435px;
  padding-left: 323px;
  line-height: 23px;
  white-space: nowrap;
}

.card + .card .setting {
  padding-bottom: 33px;
}

.ruled-top {
  border-top: 1px solid #bdbdbd;
}

.hint {
  display: flex;
  gap: 21px;
  padding: 17px 0 48px 17px;
  color: #888;
}

.hint p {
  padding-top: 1px;
}

.calc {
  padding-top: 7px;
}

.calc h3 {
  margin: 0 0 18px 3px;
  font-size: 19px;
  line-height: 19px;
  color: #888;
}

.calc .hint {
  padding-bottom: 0;
}

.finish {
  width: 239px;
  height: 59px;
  margin: -4px 0 40px 405px;
  border: 2px solid #8f8f8f;
  background: linear-gradient(#fbfbfb, #d4d4d4 45%, #bcbcbc 50%, #ececec);
  color: #888;
}

/* inspector */
.inspector {
  margin-left: 5px;
  height: 403px;
  display: flex;
  flex-direction: column;
  overflow: hidden;
  background: #e9e9e9;
}

.pane-head {
  display: flex;
  align-items: flex-end;
  height: 36px;
  padding-left: 6px;
  border-top: 3px solid #1c2230;
  border-bottom: 3px solid #2e3650;
  background: #b1b1b1;
}

.pane-head h2 {
  flex: none;
  width: 457px;
  align-self: center;
  font-size: 19px;
  font-weight: 500;
  color: #f2f2f2;
}

.pane-tab {
  display: flex;
  align-items: center;
  gap: 8px;
  width: 95px;
  height: 25px;
  margin-right: 2px;
  padding: 0 0 1px 2px;
  border: 1px solid #777;
  border-bottom: 0;
  background: linear-gradient(#e6e6e6, #c8c8c8 50%, #d8d8d8);
  font-size: 18px;
  color: #555;
  white-space: nowrap;
}

.pane-tab.active {
  height: 29px;
  margin-bottom: -3px;
  padding-bottom: 4px;
  border-top: 3px solid #2e3650;
  background: linear-gradient(#fafafa, #dedede);
  font-weight: bold;
  color: #111;
}

.sub-tabs, .alarm-tabs {
  height: 33px;
  gap: 1px;
  border-top: 0;
  padding-left: 7px;
}

.sub-tabs .tab:nth-child(1) { width: 80px; }
.sub-tabs .tab:nth-child(2) { width: 103px; }
.sub-tabs .tab:nth-child(3) { width: 121px; }
.sub-tabs .tab:nth-child(4) { width: 79px; }

.inspector-body {
  flex: 1;
  display: flex;
  min-height: 0;
}

.nav.short {
  width: 217px;
  padding: 2px 0 0;
  grid-auto-rows: 24px;
  overflow: hidden;
}

.nav.short li.sub {
  padding-left: 25px;
}

.nav.short b {
  width: 25px;
}

.splitter.low {
  width: 9px;
  padding-top: 274px;
}

.info {
  flex: 1;
  min-width: 0;
  display: flex;
  flex-direction: column;
}

.info .ruled {
  height: 36px;
  padding-left: 20px;
  font-size: 17px;
  font-weight: normal;
}

.fields {
  flex: 1;
  display: grid;
  grid-template-columns: 125px 1fr;
  align-content: start;
  gap: 7px 14px;
  margin: 11px 0 0 16px;
  padding: 29px 0 0 18px;
  background: #cbcbcb;
}

.fields label {
  text-align: right;
  line-height: 22px;
  white-space: nowrap;
}

.fields input, .fields textarea {
  display: block;
  width: 100%;
  height: 23px;
  padding: 0 4px;
  border: 1px solid #999;
  background: #fff;
  font-size: 14px;
}

.fields textarea {
  height: 94px;
  resize: none;
}

.fields .narrow {
  width: 225px;
}

.fields .readonly {
  background: #e0e0e0;
  font-size: 15px;
}

.circled {
  position: relative;
}

.fields .circled input {
  font-size: 15px;
}

.circled::after {
  content: "";
  position: absolute;
  left: -11px;
  top: -6px;
  width: 160px;
  height: 35px;
  border: 1px solid #d02020;
  border-radius: 50%;
}

/* download preview window */
.dialog {
  position: absolute;
  z-index: 2;
  top: 651px;
  left: 716px;
  right: 0;
  border-left: 1px solid #777;
  background: #cbcbcb;
}

.dialog-title {
  display: flex;
  align-items: center;
  justify-content: space-between;
  height: 26px;
  padding-left: 6px;
  background: linear-gradient(#4a4a4a, #808080 10%, #5c5c5c 38%, #1b1b1b 40%);
}

.dialog-title h2 {
  font-size: 19px;
  color: #fff;
}

.close {
  display: flex;
  align-items: center;
  justify-content: center;
  width: 25px;
  height: 26px;
  border-left: 1px solid #888;
}

.dialog-lead {
  display: flex;
  align-items: center;
  gap: 7px;
  padding: 7px 0 14px 15px;
}

.preview-wrap {
  margin: 0 15px 0 14px;
}

.preview, .alarm-table {
  width: 100%;
  table-layout: fixed;
  border-collapse: separate;
  border-spacing: 0;
}

.p-state { width: 62px; }
.p-mark { width: 38px; }
.p-target { width: 187px; }
.p-action { width: 186px; }
.p-end { width: 24px; }

th {
  height: 23px;
  padding: 0 5px;
  border-right: 1px solid #a4a4a4;
  border-bottom: 1px solid #999;
  background: linear-gradient(#ededed, #cfcfcf 60%, #dcdcdc);
  font-weight: normal;
  text-align: left;
  white-space: nowrap;
}

.bang {
  color: #5080b0;
}

td {
  height: 24px;
  padding: 0 5px;
  border-right: 2px solid #fbfbfb;
  border-bottom: 2px solid #fbfbfb;
  background: #efefef;
  white-space: nowrap;
  overflow: hidden;
}

td .icon {
  display: block;
}

.preview .tall td {
  height: 40px;
  padding-top: 1px;
  vertical-align: top;
  line-height: 18px;
}

.preview .tall .low {
  vertical-align: bottom;
}

.preview .cut td {
  height: 25px;
  border-bottom: 0;
}

.preview .sh {
  background: #e0e0e0;
}

.preview .mid {
  padding: 0;
}

.mid .icon {
  margin: 0 auto;
}

.preview i {
  display: inline-block;
  width: 15px;
  margin-right: 8px;
  vertical-align: middle;
}

.t1 i {
  margin-left: 23px;
}

.preview .t2 {
  padding-left: 73px;
}

.act {
  display: flex;
  align-items: center;
  gap: 8px;
}

span.act {
  padding-left: 25px;
}

.act input {
  appearance: none;
  width: 18px;
  height: 18px;
  border: 1px solid #2c5a9c;
  border-radius: 2px;
  background: linear-gradient(#f4faff, #28b8ea);
  margin: 0 0 0 -1px;
}

.act input::before {
  content: "";
  display: block;
  width: 12px;
  height: 11px;
  margin: 2px;
  background: #173a86;
  clip-path: polygon(0 45%, 25% 30%, 42% 60%, 85% 0, 100% 15%, 45% 100%);
}

.hscroll {
  display: flex;
  gap: 2px;
  height: 22px;
}

.hthumb {
  flex: 1;
  display: flex;
  align-items: center;
  justify-content: center;
  padding-left: 22px;
  border: 1px solid #888;
  background: linear-gradient(#ececec, #d4d4d4);
}

.dialog-foot {
  display: flex;
  justify-content: flex-end;
  padding: 10px 15px 15px;
}

.refresh {
  width: 113px;
  height: 24px;
  border: 1px solid #888;
  border-radius: 2px;
  background: linear-gradient(#f2f2f2, #cfcfcf 55%, #e4e4e4);
}

/* fault description */
.fault-row {
  position: relative;
  display: flex;
  align-items: center;
  margin-top: 6px;
}

.fault-sheet {
  position: relative;
  z-index: 3;
  flex: none;
  padding: 3px 4px 0 26px;
  background: #fff;
}

.fault {
  display: grid;
  grid-template-columns: 152px 1fr;
  width: 931px;
  padding: 1px 8px 7px;
  border: 1px solid #c4141c;
  line-height: 23px;
  color: #222;
}

.fault code {
  font-family: "Liberation Mono", monospace;
  font-size: 13px;
  line-height: 1;
}

.fault dt {
  font-weight: 500;
}

.fault dd {
  font-weight: 300;
  white-space: nowrap;
}

.fault .head {
  font-size: 19px;
  line-height: 26px;
  font-weight: normal;
}

.fault .head code {
  font-size: 16px;
}

.fault .para {
  padding: 1px 0 13px;
  line-height: 19px;
}

.fault .para:last-child {
  padding-bottom: 0;
}

.bop {
  display: flex;
  align-items: center;
  gap: 1px;
  margin: 57px 0 0 -3px;
  font-size: 18px;
  line-height: 24px;
  color: #1212c8;
  position: relative;
  z-index: 3;
}

/* annotations */
.note {
  position: absolute;
  z-index: 3;
  padding: 0 1px;
  background: #fff;
  font-size: 18px;
  line-height: 25px;
  color: #1212c8;
  white-space: nowrap;
}

.note-top {
  left: 602px;
  top: 139px;
}

.arrow-top {
  position: absolute;
  z-index: 3;
  left: 568px;
  top: 158px;
  width: 36px;
  height: 28px;
}

.note-bottom {
  left: 284px;
  top: 180px;
}

/* alarms */
.alarms {
  position: relative;
  width: 1515px;
  margin: 7px 0 3px 4px;
  background: #e9e9e9;
  border-right: 1px solid #777;
}

.pane-head.orange {
  border-bottom: 4px solid #f5a010;
  border-top-width: 2px;
  padding-right: 6px;
}

.orange h2 {
  flex: 1;
}

.orange .pane-tab.active {
  margin-bottom: -4px;
  border-top-color: #f5a010;
}

.win-btns {
  width: 62px;
  height: 16px;
  margin: 0 0 8px 22px;
}

.alarm-tabs {
  height: 32px;
}

.alarm-tabs .tab {
  width: 120px;
}

.alarm-tools {
  display: flex;
  align-items: center;
  gap: 8px;
  height: 34px;
  padding: 2px 10px 4px 2px;
}

.alarm-tools .pressed {
  height: 25px;
  padding: 0 3px;
  border: 1px solid #c8c8c8;
  background: #fafafa;
}

.recv {
  padding: 0 5px 0 51px;
}

.a-no { width: 44px; }
.a-src { width: 196px; }
.a-date { width: 53px; }
.a-time { width: 48px; }
.a-state { width: 76px; }
.a-ack { width: 44px; }
.a-alarm { width: 39px; }
.a-help { width: 94px; }
.a-info { width: 229px; }

.alarm-table th {
  height: 23px;
}

.alarm-table td {
  height: 25px;
  border-right-width: 0;
  font-size: 14px;
}

.alarm-table .event {
  font-size: 15px;
}

.alarm-table .no {
  background: #c8c8c8;
  color: #888;
}

.alarm-table .filters .no {
  padding-left: 22px;
}

.filters td {
  padding-right: 1px;
}

.filters div {
  display: flex;
}

.filters .last div {
  padding-right: 7px;
}

.filters input {
  flex: 1;
  min-width: 0;
  width: 0;
  padding: 0;
  border: 0;
  background: transparent;
}

.filters button {
  display: flex;
  align-items: center;
  justify-content: center;
  width: 21px;
  height: 21px;
  border: 1px solid #999;
  background: linear-gradient(#f6f6f6, #d8d8d8);
}

.filters button::before {
  content: "";
  width: 11px;
  height: 6px;
  background: #14148c;
  clip-path: polygon(0 0, 100% 0, 50% 100%);
}

.filters button:disabled::before {
  background: #999;
}

.hit td {
  background: #b3c0de;
}

.hit .focus {
  outline: 1px dotted #3a5ad0;
  outline-offset: -2px;
}

.alarm-table .cut td {
  height: 11px;
  border-bottom: 0;
}

/* watermark over the windows */
.watermark {
  position: absolute;
  z-index: 4;
  left: 653px;
  top: 761px;
  transform: rotate(-29deg);
  color: rgba(255, 255, 255, 0.15);
  -webkit-text-stroke: 1px rgba(255, 255, 255, 0.5);
  white-space: nowrap;
  pointer-events: none;
}

.wm-cn {
  padding-left: 16px;
  font-size: 42px;
  line-height: 42px;
}

.wm-url {
  font-family: "Liberation Sans", sans-serif;
  font-size: 27px;
  line-height: 34px;
}
```
